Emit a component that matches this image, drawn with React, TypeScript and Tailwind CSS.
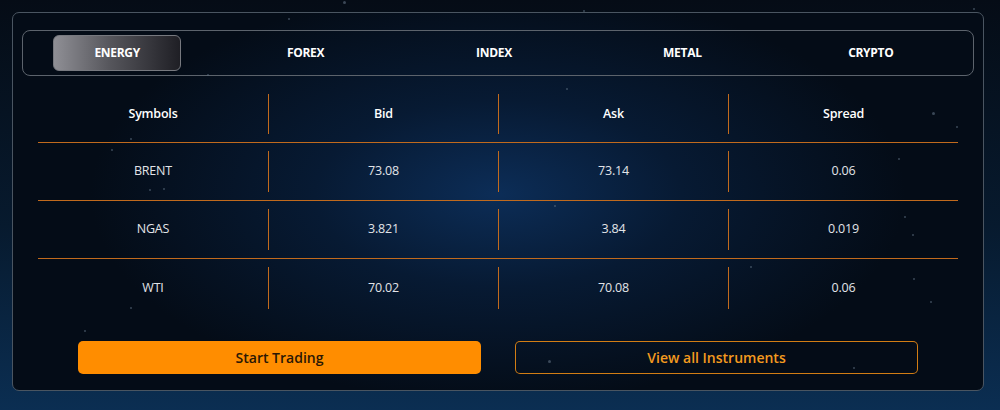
import { useState } from 'react'

type Quote = {
  symbol: string
  bid: string
  ask: string
  spread: string
}

const tabs = ['ENERGY', 'FOREX', 'INDEX', 'METAL', 'CRYPTO']

const quotes: Quote[] = [
  { symbol: 'BRENT', bid: '73.08', ask: '73.14', spread: '0.06' },
  { symbol: 'NGAS', bid: '3.821', ask: '3.84', spread: '0.019' },
  { symbol: 'WTI', bid: '70.02', ask: '70.08', spread: '0.06' },
]

// little specks scattered over the background
const stars = [
  [343, 1, 3], [207, 74, 2], [130, 138, 2], [111, 149, 2], [163, 188, 2], [149, 189, 2],
  [288, 18, 2], [566, 88, 2], [932, 112, 3], [898, 158, 2], [904, 216, 2], [912, 234, 2],
  [913, 278, 2], [554, 205, 2], [750, 266, 2], [84, 330, 2], [130, 307, 2], [548, 360, 3],
  [853, 367, 2], [583, 10, 2], [973, 8, 2], [956, 126, 2], [930, 301, 2],
]

export default function App() {
  const [active, setActive] = useState('ENERGY')

  return (
    <main className="relative h-[410px] w-[1000px] overflow-hidden bg-[linear-gradient(180deg,#050c16_0%,#071a2e_55%,#0b2e52_100%)] pt-[12px] font-['Open_Sans',sans-serif]">
      <div className="mx-[12px] flex h-[379px] w-[972px] flex-col rounded-[7px] border border-[#4a5561] bg-[radial-gradient(ellipse_42%_55%_at_50%_48%,#0c2d57_0%,#071a33_45%,#040c17_100%)] px-[9px] pt-[17px]">
        {/* Tabs */}
        <div className="grid h-[46px] grid-cols-5 items-center rounded-[8px] border border-[#5c636c] pr-[8px]">
          {tabs.map((t) => (
            <div key={t} className="flex justify-center">
              <button
                type="button"
                onClick={() => setActive(t)}
                className={
                  active === t
                    ? 'h-[36px] w-[128px] rounded-[6px] border border-[#77797f] bg-[linear-gradient(90deg,#8f8f95_0%,#55555b_45%,#1f1f25_100%)] text-[12px] font-bold tracking-[-0.3px] text-white'
                    : 'h-[36px] w-[128px] text-[12px] font-bold tracking-[-0.3px] text-white'
                }
              >
                {t}
              </button>
            </div>
          ))}
        </div>

        {/* Table */}
        <div className="mx-[16px] mt-[10px]">
          <div className="grid h-[57px] grid-cols-4 border-b border-[#c16a1d]">
            {['Symbols', 'Bid', 'Ask', 'Spread'].map((h, i) => (
              <div
                key={h}
                className={
                  i === 0
                    ? 'my-[8px] flex items-center justify-center text-[12.5px] font-semibold tracking-[-0.2px] text-white'
                    : 'my-[8px] flex items-center justify-center border-l border-[#c16a1d] text-[12.5px] font-semibold tracking-[-0.2px] text-white'
                }
              >
                {h}
              </div>
            ))}
          </div>
          {quotes.map((q, r) => (
            <div
              key={q.symbol}
              className={
                r < quotes.length - 1
                  ? 'grid h-[58px] grid-cols-4 border-b border-[#c16a1d]'
                  : 'grid h-[58px] grid-cols-4'
              }
            >
              {[q.symbol, q.bid, q.ask, q.spread].map((v, i) => (
                <div
                  key={i}
                  className={
                    i === 0
                      ? 'my-[8px] flex items-center justify-center text-[12.5px] tracking-[-0.2px] text-[#e2e4e8]'
                      : 'my-[8px] flex items-center justify-center border-l border-[#c16a1d] text-[12.5px] tracking-[-0.2px] text-[#e2e4e8]'
                  }
                >
                  {v}
                </div>
              ))}
            </div>
          ))}
        </div>

        {/* Actions */}
        <div className="mt-[24px] flex justify-center gap-[34px]">
          <a
            href="#"
            className="flex h-[33px] w-[403px] items-center justify-center rounded-[5px] bg-[#ff8d00] text-[14px] font-semibold text-[#2a1705]"
          >
            Start Trading
          </a>
          <a
            href="#"
            className="flex h-[33px] w-[403px] items-center justify-center rounded-[5px] text-[14px] font-semibold text-[#f39a1f] shadow-[inset_0_0_0_1px_#d27d14]"
          >
            View all Instruments
          </a>
        </div>
      </div>

      {stars.map(([x, y, s], i) => (
        <span
          key={i}
          className="pointer-events-none absolute rounded-full bg-[#5f6f82] opacity-60"
          style={{ left: x, top: y, width: s, height: s }}
        />
      ))}
    </main>
  )
}
